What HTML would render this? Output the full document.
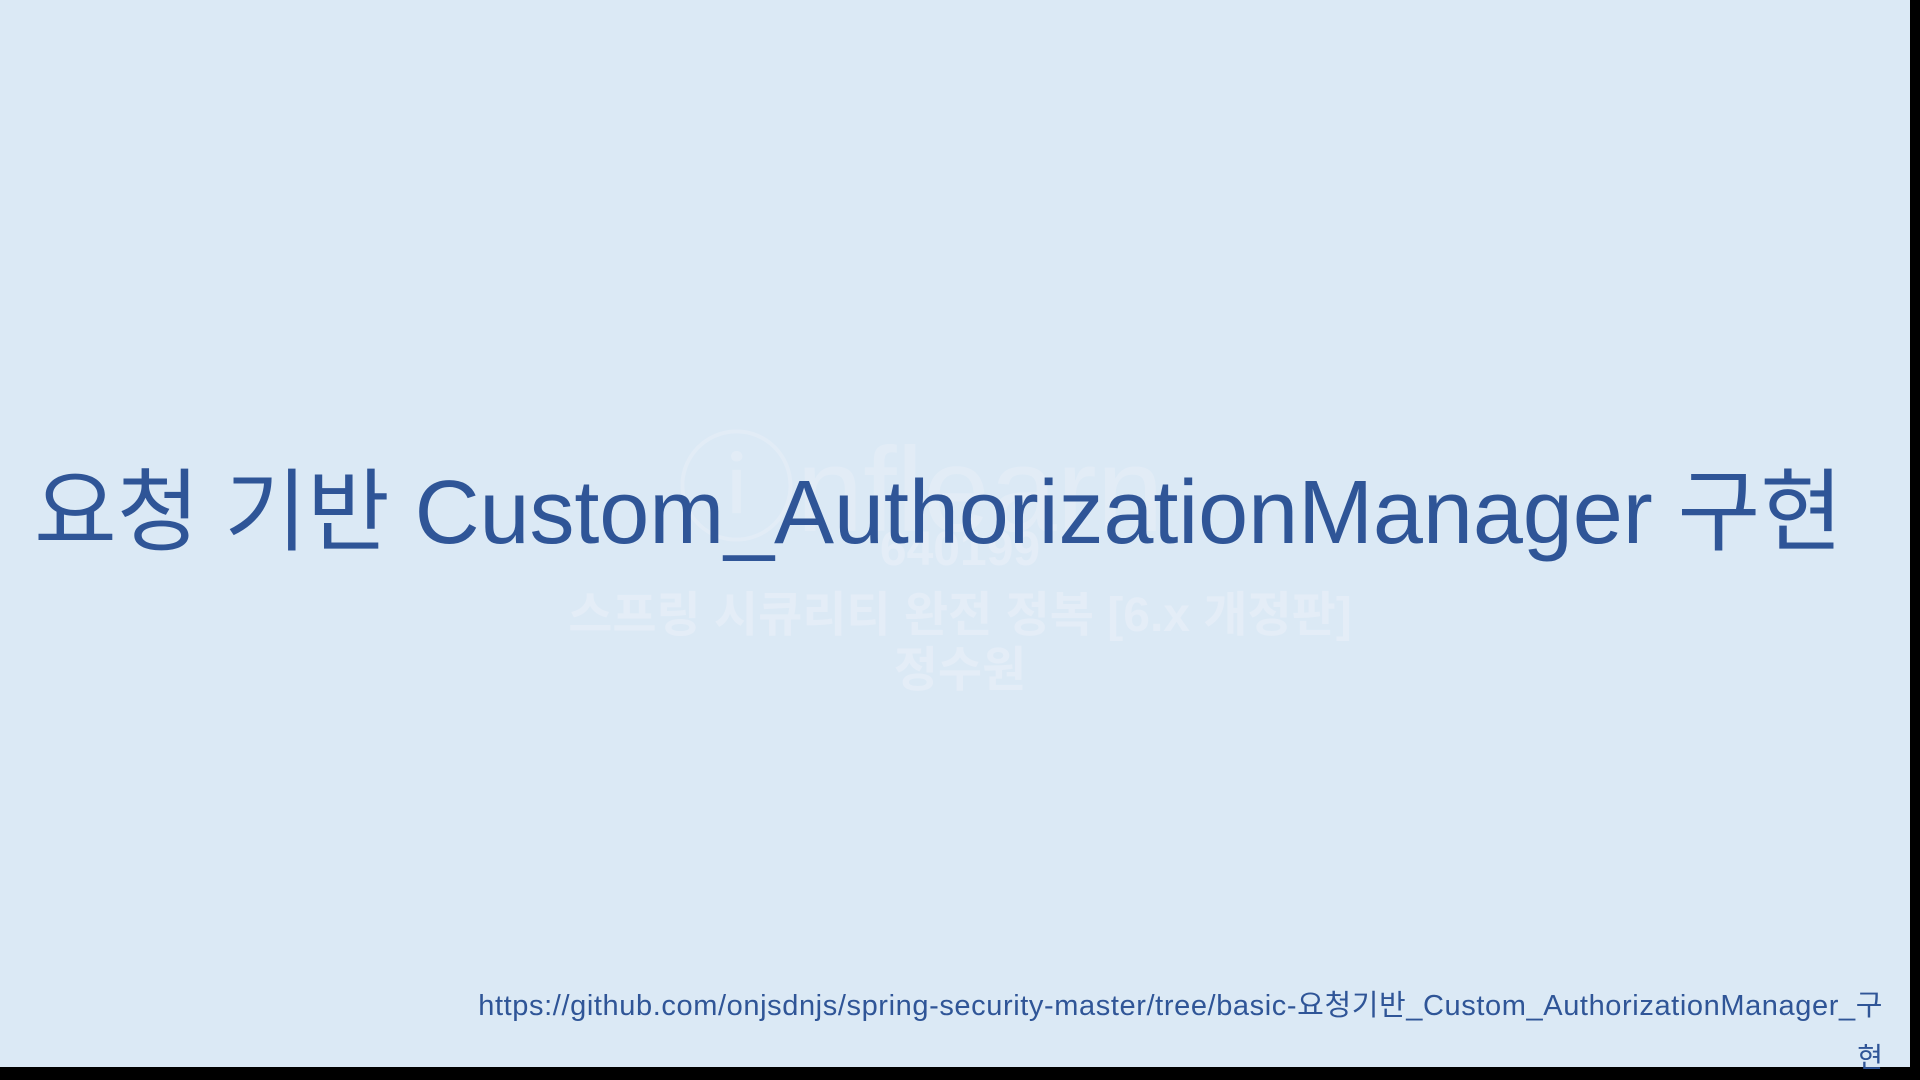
<!DOCTYPE html>
<html><head><meta charset="utf-8"><style>
html,body{margin:0;padding:0;}
body{width:1920px;height:1080px;position:relative;overflow:hidden;background:#000;}
.bg{position:absolute;left:0;top:0;width:1910px;height:1067px;background:#dbe9f5;}
.t{position:absolute;white-space:nowrap;font-family:"Liberation Sans","Noto Sans CJK KR",sans-serif;}
.title{left:34px;top:458px;font-size:90px;color:#2f5597;line-height:110px;letter-spacing:-0.1px;}
.url{right:37px;top:988px;font-size:29px;color:#2f5597;line-height:36px;letter-spacing:0.6px;}
.url2{right:37px;top:1040px;font-size:28px;color:#2f5597;line-height:36px;}
.wm{color:#e4edf7;font-weight:bold;text-align:center;left:0;width:1920px;}
</style></head><body>
<div class="bg"></div>
<div class="t wm" style="top:392px;font-size:120px;font-weight:normal;color:#e2ecf6;left:-40px;">ⓘnflearn</div>
<div class="t wm" style="top:522px;font-size:48px;">640199</div>
<div class="t wm" style="top:575px;font-size:48px;">스프링 시큐리티 완전 정복 [6.x 개정판]</div>
<div class="t wm" style="top:630px;font-size:48px;">정수원</div>
<div class="t title">요청 기반 Custom_AuthorizationManager 구현</div>
<div class="t url">https://github.com/onjsdnjs/spring-security-master/tree/basic-요청기반_Custom_AuthorizationManager_구</div>
<div class="t url2">현</div>
</body></html>
